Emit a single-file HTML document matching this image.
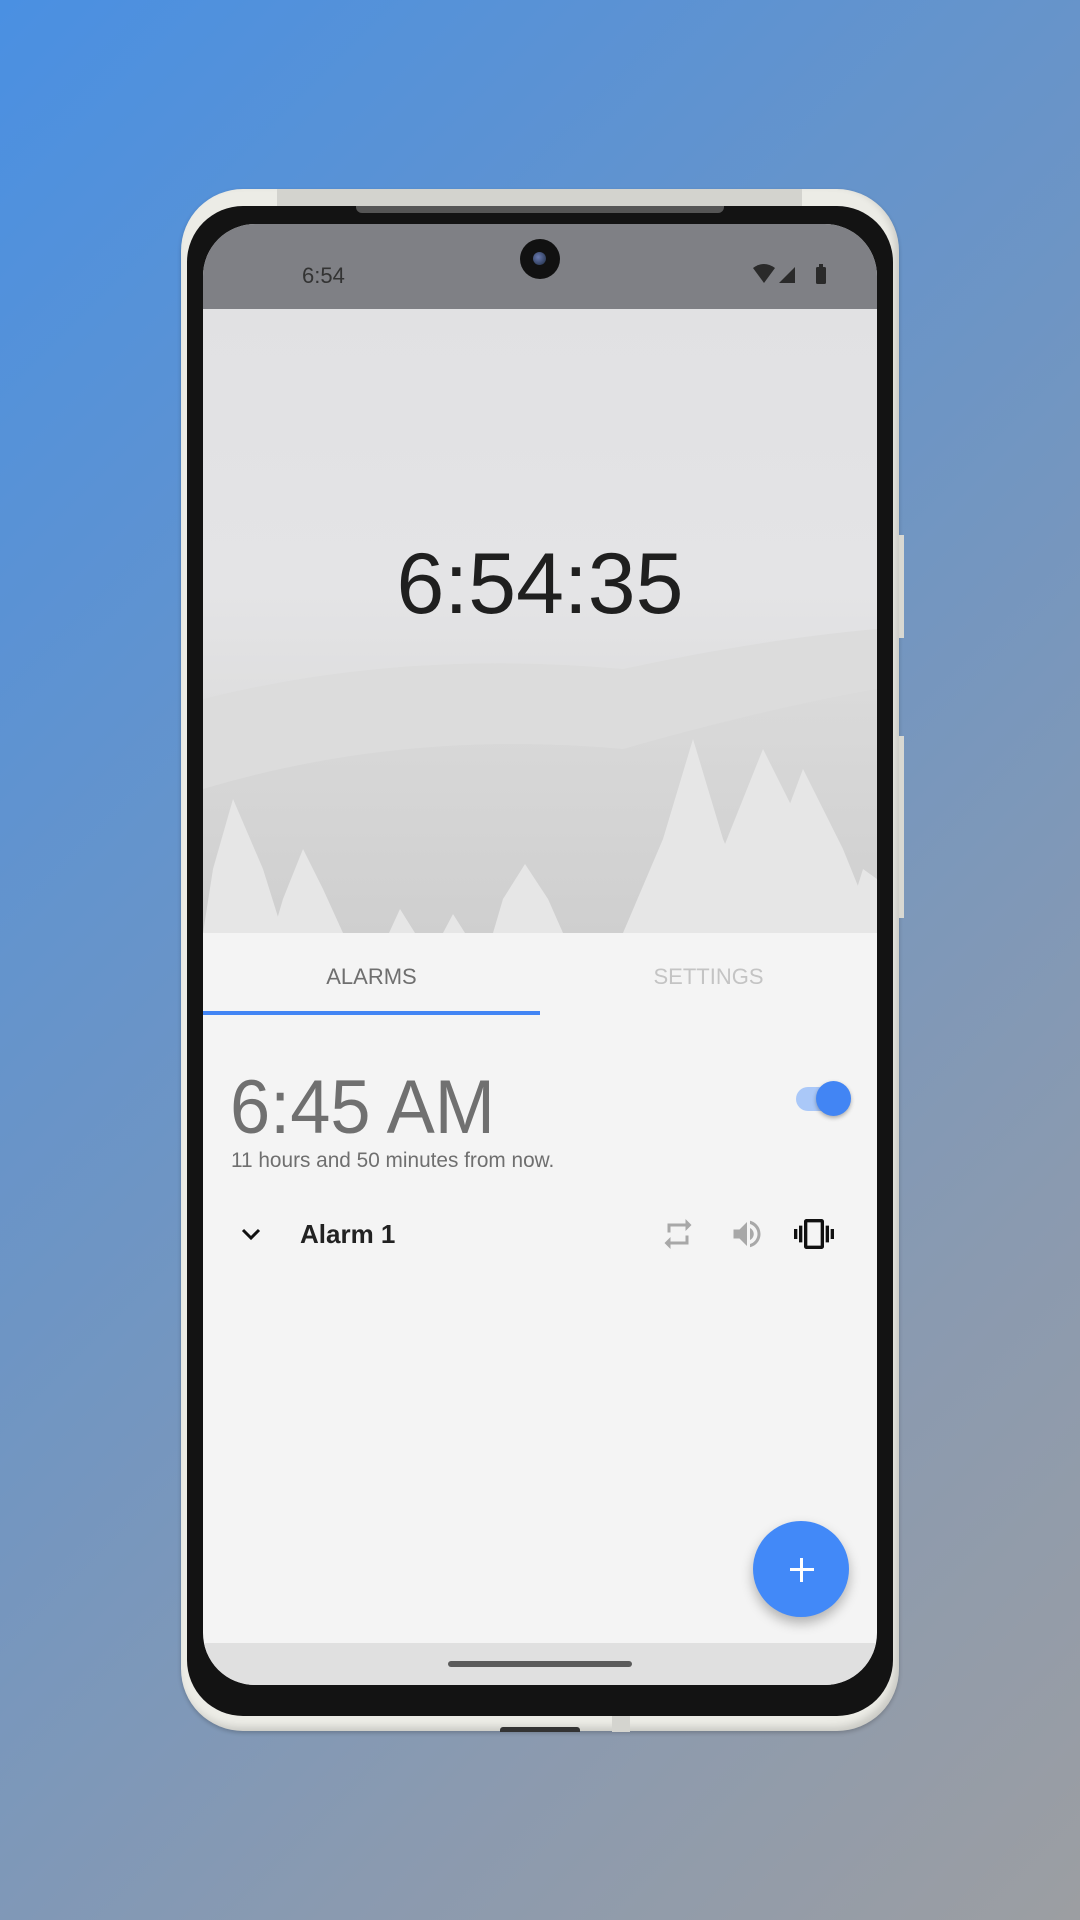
<!DOCTYPE html>
<html><head><meta charset="utf-8"><style>
*{margin:0;padding:0;box-sizing:border-box}
body{width:1080px;height:1920px;overflow:hidden;background:linear-gradient(135deg,#4a90e2 0%,#6e95c4 45%,#8a9ab0 75%,#9c9ea2 100%);font-family:"Liberation Sans",sans-serif;position:relative}
.abs{position:absolute}
.frame{left:181px;top:189px;width:718px;height:1542px;border-radius:62px;background:#ecece6;box-shadow:inset -4px -4px 8px rgba(0,0,0,.15),0 2px 4px rgba(0,0,0,.2)}
.topstrip{left:277px;top:189px;width:525px;height:17px;background:#d3d3ce}
.bezel{left:187px;top:206px;width:706px;height:1510px;border-radius:56px;background:#131313}
.speaker{left:356px;top:206px;width:368px;height:7px;border-radius:0 0 6px 6px;background:#555}
.screen{left:203px;top:224px;width:674px;height:1461px;border-radius:52px;overflow:hidden;background:#f4f4f4}
.status{left:0;top:0;width:674px;height:85px;background:#7f8085}
.img{left:0;top:85px;width:674px;height:624px;background:linear-gradient(#e1e1e3 0%,#e4e4e6 45%,#dcdcdc 70%,#d6d6d6 100%);overflow:hidden}
.nav{left:0;top:1419px;width:674px;height:42px;background:#e0e0e0}
</style></head><body>
<div class="abs frame"></div>
<div class="abs topstrip"></div>
<div class="abs" style="left:899px;top:535px;width:5px;height:103px;background:#d8d8d2"></div>
<div class="abs" style="left:899px;top:736px;width:5px;height:182px;background:#d8d8d2"></div>
<div class="abs" style="left:500px;top:1727px;width:80px;height:5px;background:#333;border-radius:3px 3px 0 0"></div>
<div class="abs" style="left:612px;top:1716px;width:18px;height:16px;background:#d4d4cf"></div>
<div class="abs bezel"></div>
<div class="abs speaker"></div>
<div class="abs screen">
  <div class="abs status">
    <div class="abs" style="left:99px;top:39px;font-size:22px;color:#333">6:54</div>
    <div class="abs" style="left:317px;top:15px;width:40px;height:40px;border-radius:50%;background:#111"><div style="margin:13px;width:13px;height:13px;border-radius:50%;background:radial-gradient(circle at 40% 40%,#6a7ab0,#1b2a40)"></div></div>
    <svg class="abs" style="left:548px;top:39px" width="80" height="22" viewBox="0 0 80 22">
      <path d="M2 5 Q13 -3 24 5 L13 20 Z" fill="#2a2a2a"/>
      <path d="M28 20 L44 4 L44 20 Z" fill="#2a2a2a"/>
      <rect x="65" y="4" width="10" height="17" rx="1.5" fill="#2a2a2a"/><rect x="68" y="1" width="4" height="4" fill="#2a2a2a"/>
    </svg>
  </div>
  <div class="abs img">
    <svg width="674" height="624" viewBox="0 0 674 624" style="position:absolute;left:0;top:0">
      <defs><linearGradient id="m" x1="0" y1="0" x2="0" y2="1"><stop offset="0" stop-color="#dadada"/><stop offset="1" stop-color="#cfcfcf"/></linearGradient></defs>
      <path d="M0 390 Q200 340 420 360 Q560 330 674 320 L674 624 L0 624 Z" fill="#dcdcdc"/>
      <path d="M0 480 Q200 420 420 440 Q560 400 674 380 L674 624 L0 624 Z" fill="url(#m)"/>
      <g fill="#e6e6e6">
        <path d="M30 490 L10 560 L0 624 L80 624 L60 560 Z"/>
        <path d="M100 540 L80 590 L70 624 L140 624 L120 580 Z"/>
        <path d="M322 555 L300 590 L290 624 L360 624 L345 590 Z"/>
        <path d="M197 600 L186 624 L212 624 Z"/>
        <path d="M250 605 L240 624 L262 624 Z"/>
        <path d="M490 430 L460 530 L420 624 L560 624 L520 530 Z"/>
        <path d="M560 440 L520 540 L500 624 L640 624 L610 540 Z"/>
        <path d="M600 460 L570 540 L560 624 L674 624 L640 540 Z"/>
        <path d="M660 560 L640 624 L674 624 L674 570 Z"/>
      </g>
    </svg>
    <div class="abs" style="left:0;width:674px;top:226px;text-align:center;font-size:86px;color:#1f1f1f">6:54:35</div>
  </div>
  <div class="abs" style="left:0;top:740px;width:337px;text-align:center;font-size:22px;color:#6f6f6f">ALARMS</div>
  <div class="abs" style="left:337px;top:740px;width:337px;text-align:center;font-size:22px;color:#c4c4c4">SETTINGS</div>
  <div class="abs" style="left:0;top:787px;width:337px;height:4px;background:#4285f4"></div>
  <div class="abs" style="left:27px;top:840px;font-size:76px;color:#707070;transform:scaleX(.95);transform-origin:left">6:45 AM</div>
  <div class="abs" style="left:28px;top:925px;font-size:20.8px;color:#6f6f6f">11 hours and 50 minutes from now.</div>
  <div class="abs" style="left:593px;top:863px;width:48px;height:24px;border-radius:12px;background:#aac8f8"></div>
  <div class="abs" style="left:613px;top:857px;width:35px;height:35px;border-radius:50%;background:#4285f4;box-shadow:0 2px 4px rgba(0,0,0,.3)"></div>
  <svg class="abs" style="left:36px;top:998px" width="24" height="24" viewBox="0 0 24 24"><path d="M4 8 L12 16 L20 8" stroke="#111" stroke-width="3" fill="none"/></svg>
  <div class="abs" style="left:97px;top:995px;font-size:26px;font-weight:bold;color:#222">Alarm 1</div>
  <svg class="abs" style="left:457px;top:992px" width="36" height="36" viewBox="0 0 24 24"><path d="M7 7h10v3l4-4-4-4v3H5v6h2V7zm10 10H7v-3l-4 4 4 4v-3h12v-6h-2v4z" fill="#a8a8a8"/></svg>
  <svg class="abs" style="left:526px;top:992px" width="36" height="36" viewBox="0 0 24 24"><path d="M3 9v6h4l5 5V4L7 9H3zm13.5 3c0-1.77-1.02-3.29-2.5-4.03v8.05c1.48-.73 2.5-2.25 2.5-4.02z" fill="#a8a8a8"/><path d="M14 3.2v2.1c2.9.9 5 3.5 5 6.7s-2.1 5.8-5 6.7v2.1c4-.9 7-4.5 7-8.8s-3-7.9-7-8.8z" fill="#a8a8a8"/></svg>
  <svg class="abs" style="left:591px;top:990px" width="40" height="40" viewBox="0 0 24 24"><path d="M0 15h2V9H0v6zm3 2h2V7H3v10zm19-8v6h2V9h-2zm-3 8h2V7h-2v10zM16.5 3h-9C6.67 3 6 3.670 6 4.5v15c0 .83.67 1.5 1.5 1.5h9c.83 0 1.5-.67 1.5-1.5v-15c0-.83-.67-1.5-1.5-1.5zM16 19H8V5h8v14z" fill="#111"/></svg>
  <div class="abs" style="left:550px;top:1297px;width:96px;height:96px;border-radius:50%;background:#4289f8;box-shadow:0 6px 12px rgba(0,0,0,.28)"></div>
  <div class="abs" style="left:587px;top:1344px;width:24px;height:3px;background:#fff"></div>
  <div class="abs" style="left:597px;top:1334px;width:3px;height:24px;background:#fff"></div>
  <div class="abs nav"><div style="position:absolute;left:245px;top:18px;width:184px;height:6px;border-radius:3px;background:#5b5b5b"></div></div>
</div>
</body></html>
